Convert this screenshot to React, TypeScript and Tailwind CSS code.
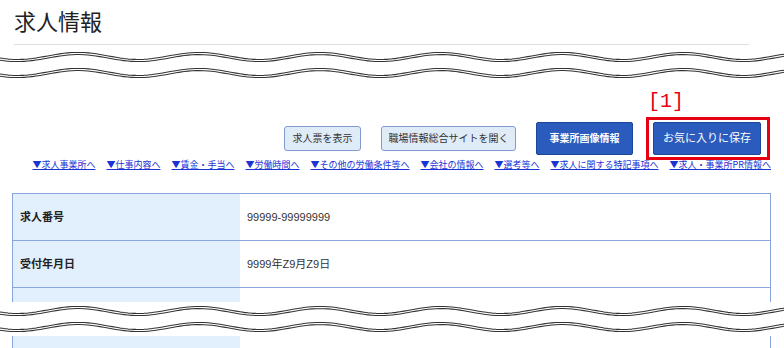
const links = [
  "▼求人事業所へ",
  "▼仕事内容へ",
  "▼賃金・手当へ",
  "▼労働時間へ",
  "▼その他の労働条件等へ",
  "▼会社の情報へ",
  "▼選考等へ",
  "▼求人に関する特記事項へ",
  "▼求人・事業所PR情報へ",
];

const rows = [
  { label: "求人番号", value: "99999-99999999" },
  { label: "受付年月日", value: "9999年Z9月Z9日" },
  { label: "", value: "" },
];

// sine path for the page-break marks
const wavePath = (c: number) => {
  const pts: string[] = [];
  for (let x = -4; x <= 788; x += 4) {
    const y = c - 3.5 * Math.cos((2 * Math.PI * (x - 78)) / 121);
    pts.push(`${x},${y.toFixed(2)}`);
  }
  return "M" + pts.join(" L");
};

const Break = () => (
  <svg width="784" height="34" className="block">
    {[9, 25].map((c) => (
      <g key={c}>
        <path d={wavePath(c)} fill="none" stroke="#333" strokeWidth="3.2" />
        <path d={wavePath(c)} fill="none" stroke="#fff" strokeWidth="1.1" />
      </g>
    ))}
  </svg>
);

const App = () => {
  return (
    <div className="w-[784px] h-[348px] overflow-hidden bg-white font-['Liberation_Sans','Noto_Sans_CJK_JP',sans-serif] text-[#222]">
      {/* title */}
      <div className="ml-[14px] w-[735px] h-[45px] border-b border-[#dddddd] pt-[4px]">
        <h1 className="text-[22px] leading-[32px] font-['Noto_Sans_CJK_JP',sans-serif]">求人情報</h1>
      </div>
      <div className="mt-[3px]">
        <Break />
      </div>

      <div className="h-[220px] px-[12px] pt-[40px]">
        {/* buttons */}
        <div className="flex justify-end items-center gap-5 pr-[11px] h-[33px]">
          <button className="w-[77px] h-[25px] rounded-[3px] border border-[#7f9bcf] bg-[#e0ebf8] text-[10px] text-[#333]">
            求人票を表示
          </button>
          <button className="w-[135px] h-[25px] rounded-[3px] border border-[#7f9bcf] bg-[#e0ebf8] text-[10px] text-[#333]">
            職場情報総合サイトを開く
          </button>
          <button className="w-[97px] h-[33px] rounded-[2px] border border-[#1c4799] bg-[#2a5bbd] text-[10px] font-bold text-white">
            事業所画像情報
          </button>
          <div className="relative">
            <button className="w-[108px] h-[33px] rounded-[2px] border border-[#1c4799] bg-[#2a5bbd] text-[11px] text-white">
              お気に入りに保存
            </button>
            <div className="absolute -left-[7px] -right-[9px] -top-[5px] -bottom-[5px] border-[3px] border-[#e60012]" />
            <span className="absolute -left-[5px] -top-[30px] text-[20px] leading-[20px] text-[#e60012] font-['Liberation_Mono',monospace]">
              [1]
            </span>
          </div>
        </div>

        {/* anchor links */}
        <div className="mt-[3px] flex justify-end gap-[11px] pr-[1px] text-[9px] leading-[13px] font-['Noto_Sans_CJK_JP',sans-serif]">
          {links.map((l) => (
            <a key={l} href="#" className="text-[#1a33d6] underline whitespace-nowrap">
              {l}
            </a>
          ))}
        </div>

        {/* table */}
        <div className="mt-[22px] w-[759px] h-[109px] overflow-hidden border-t border-l border-r border-[#88a6dc]">
          {rows.map((r, i) => (
            <div key={i} className="flex h-[47px] border-b border-[#88a6dc]">
              <div className="w-[227px] bg-[#e2effc] flex items-center pl-[7px] text-[11px] font-bold text-[#222]">
                {r.label}
              </div>
              <div className="flex-1 flex items-center pl-[7px] text-[11px] text-[#333]">{r.value}</div>
            </div>
          ))}
        </div>
      </div>

      <Break />

      <div className="ml-[12px] w-[759px] h-[40px] flex border-l border-r border-[#88a6dc]">
        <div className="w-[227px] bg-[#e2effc]" />
      </div>
    </div>
  );
};

export default App;
